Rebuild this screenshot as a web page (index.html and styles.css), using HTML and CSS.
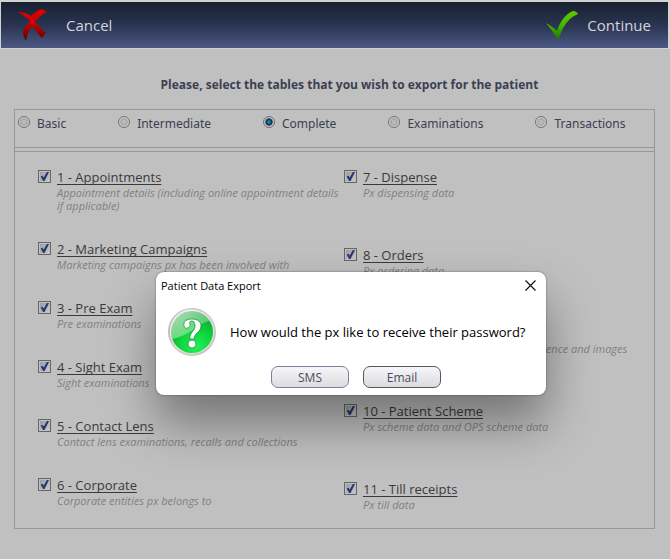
FILE: index.html
```html
<!DOCTYPE html>
<html lang="en">
<head>
    <meta charset="UTF-8">
    <meta name="viewport" content="width=device-width, initial-scale=1.0">
    <title>Patient Data Export</title>
    <link rel="stylesheet" href="styles.css">
</head>
<body>

<!-- Toolbar -->
<header class="toolbar">
    <button class="tool-button cancel" type="button">
        <svg width="30" height="34" viewBox="0 0 30 34" aria-hidden="true">
            <defs>
                <linearGradient id="red" x1="0" y1="0" x2="0" y2="1">
                    <stop offset="0" stop-color="#e00000"/>
                    <stop offset="0.45" stop-color="#c80000"/>
                    <stop offset="1" stop-color="#5c0000"/>
                </linearGradient>
            </defs>
            <path fill="url(#red)" d="M0 4C5 4 9 5 13 8C16 5 20 2 24 1L29 4C24 6 20 10 17 14C21 18 25 23 28 25C26 26 26 28 24 30C21 27 18 22 14 18C10 23 9 28 8 33C5 28 5 25 5 23C7 20 9 16 12 13C9 10 5 7 0 4Z"/>
        </svg>
        <span>Cancel</span>
    </button>
    <button class="tool-button continue" type="button">
        <svg width="32" height="28" viewBox="0 0 32 28" aria-hidden="true">
            <defs>
                <linearGradient id="green" x1="0" y1="0" x2="0" y2="1">
                    <stop offset="0" stop-color="#5bc800"/>
                    <stop offset="0.5" stop-color="#46b800"/>
                    <stop offset="1" stop-color="#1e7800"/>
                </linearGradient>
            </defs>
            <path fill="url(#green)" d="M0 12C4 14 8 17 11 20C14 11 19 3 27 0C29 0 31 1 32 3C24 6 16 15 13 28L11 27C8 22 4 17 0 12Z"/>
        </svg>
        <span>Continue</span>
    </button>
</header>

<main class="content">
    <h1>Please, select the tables that you wish to export for the patient</h1>

    <form class="panel">
        <div class="presets">
            <label><input type="radio" name="preset">Basic</label>
            <label><input type="radio" name="preset">Intermediate</label>
            <label><input type="radio" name="preset" checked>Complete</label>
            <label><input type="radio" name="preset">Examinations</label>
            <label><input type="radio" name="preset">Transactions</label>
        </div>

        <div class="tables">
            <div class="column">
                <div class="item">
                    <input type="checkbox" id="t1" checked>
                    <div>
                        <label for="t1">1 - Appointments</label>
                        <p>Appointment details (including online appointment details if applicable)</p>
                    </div>
                </div>
                <div class="item">
                    <input type="checkbox" id="t2" checked>
                    <div>
                        <label for="t2">2 - Marketing Campaigns</label>
                        <p>Marketing campaigns px has been involved with</p>
                    </div>
                </div>
                <div class="item">
                    <input type="checkbox" id="t3" checked>
                    <div>
                        <label for="t3">3 - Pre Exam</label>
                        <p>Pre examinations</p>
                    </div>
                </div>
                <div class="item">
                    <input type="checkbox" id="t4" checked>
                    <div>
                        <label for="t4">4 - Sight Exam</label>
                        <p>Sight examinations</p>
                    </div>
                </div>
                <div class="item">
                    <input type="checkbox" id="t5" checked>
                    <div>
                        <label for="t5">5 - Contact Lens</label>
                        <p>Contact lens examinations, recalls and collections</p>
                    </div>
                </div>
                <div class="item">
                    <input type="checkbox" id="t6" checked>
                    <div>
                        <label for="t6">6 - Corporate</label>
                        <p>Corporate entities px belongs to</p>
                    </div>
                </div>
            </div>

            <div class="column wide">
                <div class="item">
                    <input type="checkbox" id="t7" checked>
                    <div>
                        <label for="t7">7 - Dispense</label>
                        <p>Px dispensing data</p>
                    </div>
                </div>
                <div class="item">
                    <input type="checkbox" id="t8" checked>
                    <div>
                        <label for="t8">8 - Orders</label>
                        <p>Px ordering data</p>
                    </div>
                </div>
                <div class="item">
                    <input type="checkbox" id="t9" checked>
                    <div>
                        <label for="t9">9 - Correspondence</label>
                        <p>Px e-mails, letters, recalls, correspondence and images</p>
                    </div>
                </div>
                <div class="item">
                    <input type="checkbox" id="t10" checked>
                    <div>
                        <label for="t10">10 - Patient Scheme</label>
                        <p>Px scheme data and OPS scheme data</p>
                    </div>
                </div>
                <div class="item">
                    <input type="checkbox" id="t11" checked>
                    <div>
                        <label for="t11">11 - Till receipts</label>
                        <p>Px till data</p>
                    </div>
                </div>
            </div>
        </div>
    </form>
</main>

<!-- Password prompt -->
<div class="overlay">
    <div class="dialog" role="dialog" aria-labelledby="dialog-title">
        <div class="dialog-head">
            <h2 id="dialog-title">Patient Data Export</h2>
            <button class="close" type="button" aria-label="Close">
                <svg width="11" height="11" viewBox="0 0 11 11" aria-hidden="true">
                    <path d="M0.5 0.5L10.5 10.5M10.5 0.5L0.5 10.5" stroke="#111" stroke-width="1.2" fill="none"/>
                </svg>
            </button>
        </div>
        <div class="dialog-body">
            <svg width="48" height="48" viewBox="0 0 48 48" aria-hidden="true">
                <defs>
                    <linearGradient id="ring" x1="0" y1="0" x2="1" y2="1">
                        <stop offset="0" stop-color="#a9a7a6"/>
                        <stop offset="0.5" stop-color="#d6d2d1"/>
                        <stop offset="1" stop-color="#c4c0bf"/>
                    </linearGradient>
                    <radialGradient id="ball" cx="0.6" cy="0.85" r="0.85">
                        <stop offset="0" stop-color="#1ff25a"/>
                        <stop offset="0.45" stop-color="#0fd53c"/>
                        <stop offset="1" stop-color="#0a9a28"/>
                    </radialGradient>
                    <linearGradient id="gloss" x1="0" y1="0" x2="1" y2="1">
                        <stop offset="0" stop-color="#fff" stop-opacity="0.75"/>
                        <stop offset="1" stop-color="#fff" stop-opacity="0.1"/>
                    </linearGradient>
                </defs>
                <circle cx="24" cy="24" r="24" fill="url(#ring)"/>
                <circle cx="24" cy="24" r="22" fill="#e6e3e2"/>
                <circle cx="24" cy="24" r="21" fill="url(#ball)"/>
                <path fill="url(#gloss)" d="M4 31A21 21 0 0 1 42 13C30 15 24 27 4 31Z"/>
                <path fill="#fff" stroke="#0b8a2a" stroke-width="0.7" d="M16 18C15 13 19 11 24 11C30 11 33 14 33 18C33 24 26 25 26 31L22 31C21 25 27 23 27 18C27 15 26 13 24 13C22 13 21 14 22 16C23 20 17 22 16 18Z"/>
                <circle cx="24" cy="36" r="4" fill="#fff" stroke="#0b8a2a" stroke-width="0.7"/>
            </svg>
            <p>How would the px like to receive their password?</p>
        </div>
        <div class="dialog-actions">
            <button class="choice focused" type="button">SMS</button>
            <button class="choice" type="button">Email</button>
        </div>
    </div>
</div>

</body>
</html>
```

FILE: styles.css
```css
* {
    box-sizing: border-box;
}
body {
    margin: 0;
    min-height: 100vh;
    background-color: #c0c0c0;
    border-bottom: 1px solid #f4f4f4;
    font-family: "Open Sans", "Noto Sans", sans-serif;
    font-size: 12px;
    color: #3c3f50;
}
h1, h2, p {
    margin: 0;
}
button {
    font-family: inherit;
    cursor: pointer;
}

/* Toolbar */
.toolbar {
    display: flex;
    justify-content: space-between;
    height: 49px;
    padding: 0 17px 0 17px;
    background: linear-gradient(#182030, #293450 50%, #4c5884);
    border: 1px solid #d2d2d2;
    border-top-width: 2px;
    border-right-width: 2px;
}
.tool-button {
    display: flex;
    align-items: center;
    padding: 0;
    border: 0;
    background: none;
    color: #d4d4d8;
    font-size: 15px;
}
.cancel {
    gap: 18px;
}
.continue {
    gap: 9px;
}

/* Main panel */
.content {
    padding: 26px 15px 30px 14px;
}
h1 {
    margin-left: 30px;
    font-size: 12px;
    line-height: 20px;
    text-align: center;
}
.panel {
    margin-top: 14px;
    border: 1px solid #989898;
}
.presets {
    display: flex;
    gap: 52px;
    height: 38px;
    padding: 4px 3px;
    border-bottom: 1px solid #989898;
    font-family: "Noto Sans", sans-serif;
}
.presets label {
    display: flex;
    gap: 7px;
    line-height: 20px;
}
input[type="radio"] {
    appearance: none;
    width: 12px;
    height: 12px;
    margin: 2px 0 0;
    border: 1px solid #707274;
    border-radius: 50%;
    background: radial-gradient(circle closest-side, #b8b9bc 40%, #9a9ca0 65%, #c8c8ca 80%);
}
input[type="radio"]:checked {
    background: radial-gradient(circle closest-side, #3b9ac8, #0a3d66 50%, #142c40 65%, #c0c0c4 80%);
}
.tables {
    display: grid;
    grid-template-columns: 51% 1fr;
    margin-top: 3px;
    padding: 17px 16px 17px 23px;
    border-top: 1px solid #989898;
}
.item {
    display: flex;
    gap: 6px;
    margin-bottom: 29px;
}
.wide .item {
    margin-bottom: 48px;
}
.column .item:last-child {
    margin-bottom: 0;
}
.item label {
    display: block;
    width: fit-content;
    height: 17px;
    line-height: 16px;
    font-size: 13px;
    color: #3a3a3c;
    text-decoration: underline;
    text-decoration-skip-ink: none;
    text-underline-offset: 2px;
}
.item p {
    font-size: 11px;
    line-height: 13px;
    font-style: italic;
    color: #808080;
}
input[type="checkbox"] {
    appearance: none;
    flex: none;
    width: 13px;
    height: 13px;
    margin: 1px 0 0;
    padding: 1px;
    border: 1px solid #666;
    background: linear-gradient(135deg, #9a9ca2, #c8c8ca) content-box;
}
input[type="checkbox"]:checked::before {
    content: "";
    display: block;
    width: 9px;
    height: 9px;
    background-color: #26386f;
    clip-path: polygon(8% 50%, 28% 42%, 42% 62%, 76% 0, 100% 0, 50% 100%, 34% 100%);
}

/* Dialog */
.overlay {
    position: absolute;
    inset: 0;
    display: flex;
    justify-content: center;
    align-items: flex-start;
    padding: 272px 0 0 32px;
}
.dialog {
    width: 390px;
    padding: 0 10px 7px 5px;
    border-radius: 8px;
    background-color: #fff;
    box-shadow: 0 0 2px rgba(0, 0, 0, 0.5), 0 28px 50px rgba(0, 0, 0, 0.4);
    color: #000;
}
.dialog-head {
    display: flex;
    justify-content: space-between;
    align-items: center;
    height: 27px;
}
h2 {
    font-size: 11px;
    font-weight: normal;
}
.close {
    display: flex;
    padding: 0;
    border: 0;
    background: none;
}
.dialog-body {
    display: flex;
    align-items: center;
    gap: 14px;
    padding: 9px 7px 10px;
    font-size: 13px;
}
.dialog-actions {
    display: flex;
    justify-content: center;
    gap: 14px;
    padding-left: 15px;
}
.choice {
    width: 78px;
    height: 22px;
    padding: 0;
    border: 1px solid #55565e;
    border-radius: 7px;
    background: linear-gradient(#f6f6f9, #dcdce0);
    color: #4a4c60;
    font-size: 12px;
}
.choice.focused {
    border-color: #75849a;
}
```
